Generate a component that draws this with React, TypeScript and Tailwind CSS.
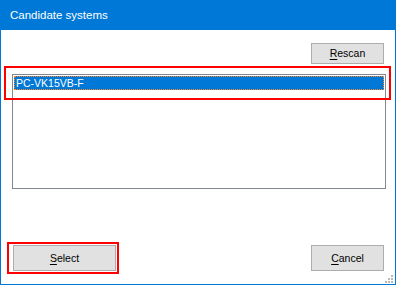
import React from "react";

const font = { fontFamily: '"Segoe UI", "Liberation Sans", Arial, sans-serif' };

function Btn({ w, h, children }: { w: string; h: string; children: React.ReactNode }) {
  return (
    <div
      className={`${w} ${h} bg-[#e1e1e1] border border-[#adadad] flex items-center justify-center text-[10.5px] text-black leading-none`}
    >
      {children}
    </div>
  );
}

export default function App() {
  return (
    <div className="w-[397px] h-[286px] bg-white" style={font}>
      <div className="relative w-[396px] h-[285px] border-x border-b border-[#0078d7] bg-white flex flex-col">
        <div className="h-[30px] -mx-px bg-[#0078d7] pl-[10px] pt-[8px] text-white text-[11.5px] leading-[15px]">
          Candidate systems
        </div>
        <div className="flex justify-end pr-[11px] mt-[13px]">
          <Btn w="w-[73px]" h="h-[21px]">
            <span>
              <span className="underline underline-offset-[2px]">R</span>escan
            </span>
          </Btn>
        </div>
        <div className="ml-[11px] mt-[10px] w-[374px] h-[115px] border border-[#828790] bg-white p-px">
          <div className="h-[14px] bg-[#0078d7] border border-dotted border-[#ff8728] text-white text-[10.5px] leading-[12px] pl-px">
            PC-VK15VB-F
          </div>
        </div>
        <div className="flex justify-between pl-[12px] pr-[11px] mt-[56px]">
          <Btn w="w-[103px]" h="h-[26px]">
            <span>
              <span className="underline underline-offset-[2px]">S</span>elect
            </span>
          </Btn>
          <Btn w="w-[73px]" h="h-[26px]">
            <span>
              <span className="underline underline-offset-[2px]">C</span>ancel
            </span>
          </Btn>
        </div>

        <div className="absolute left-[3px] top-[66px] w-[387px] h-[34px] border-2 border-[#ff0000] pointer-events-none" />
        <div className="absolute left-[6px] top-[242px] w-[112px] h-[32px] border-2 border-[#ff0000] pointer-events-none" />

        <svg
          className="absolute right-[2px] bottom-[1px]"
          width="9"
          height="9"
          viewBox="0 0 9 9"
        >
          <rect x="7" y="1" width="2" height="2" fill="#b9b9b9" />
          <rect x="4" y="4" width="2" height="2" fill="#b9b9b9" />
          <rect x="7" y="4" width="2" height="2" fill="#b9b9b9" />
          <rect x="1" y="7" width="2" height="2" fill="#b9b9b9" />
          <rect x="4" y="7" width="2" height="2" fill="#b9b9b9" />
          <rect x="7" y="7" width="2" height="2" fill="#b9b9b9" />
        </svg>
      </div>
    </div>
  );
}
